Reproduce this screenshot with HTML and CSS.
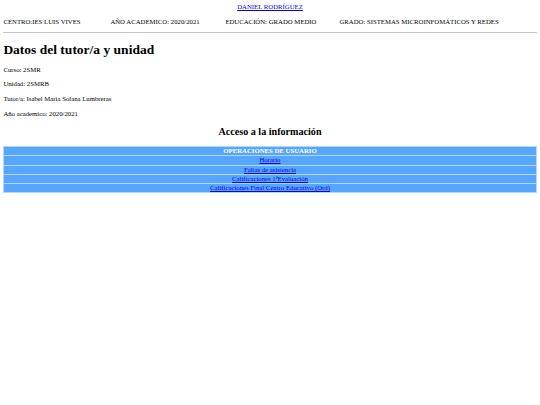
FILE: index.html
```html
<!DOCTYPE html>
<html lang="es">
<head>
<meta charset="utf-8">
<title>Datos del tutor</title>
<link rel="stylesheet" href="styles.css">
</head>
<body>
<div class="user"><a href="#">DANIEL RODRÍGUEZ</a></div>
<div class="info">
  <span class="c1">CENTRO:IES LUIS VIVES</span>
  <span class="c2">AÑO ACADEMICO: 2020/2021</span>
  <span class="c3">EDUCACIÓN: GRADO MEDIO</span>
  <span class="c4">GRADO: SISTEMAS MICROINFOMÁTICOS Y REDES</span>
</div>
<hr class="rule">
<h1 class="title">Datos del tutor/a y unidad</h1>
<p class="field">Curso: 2SMR</p>
<p class="field">Unidad: 2SMRB</p>
<p class="field">Tutor/a: Isabel María Solana Lumbreras</p>
<p class="field">Año academico: 2020/2021</p>
<h2 class="subtitle">Acceso a la información</h2>
<table class="ops">
  <tr><th>OPERACIONES DE USUARIO</th></tr>
  <tr><td><a href="#">Horario</a></td></tr>
  <tr><td><a href="#">Faltas de asistencia</a></td></tr>
  <tr><td><a href="#">Calificaciones 1ªEvaluación</a></td></tr>
  <tr><td><a href="#">Calificaciones Final Centro Educativo (Ord)</a></td></tr>
</table>
</body>
</html>
```
FILE: styles.css
```css
html { background: #fff; }
body {
  margin: 3.375px;
  font-family: "Liberation Serif", "Times New Roman", serif;
  font-size: 6.75px;
  line-height: 7.76px;
  color: #000;
}
a { color: #0000ee; }
.user {
  text-align: center;
}
.info {
  display: grid;
  grid-template-columns: 107px 115px 114px auto;
  margin: 6.75px 0 0;
}
.rule {
  margin: 6.75px 0 0 0;
  border: none;
  border-top: 1px solid #c4c4c4;
  height: 0;
}
.title {
  font-size: 13.5px;
  line-height: 15.5px;
  margin: 9.05px 0 8px;
  font-weight: bold;
}
.field {
  margin: 6.75px 0;
}
.subtitle {
  font-size: 10.125px;
  line-height: 11.63px;
  text-align: center;
  margin: 8.4px 0;
  font-weight: bold;
}
.ops {
  width: 100%;
  border-collapse: separate;
  border-spacing: 1px 1px;
  background: #b4d8ff;
  margin-top: 8.9px;
}
.ops th, .ops td {
  background: #56a6ff;
  text-align: center;
  padding: 0;
  height: 8.2px;
  line-height: 8.2px;
}
.ops th {
  color: #fff;
  font-weight: bold;
}
```
